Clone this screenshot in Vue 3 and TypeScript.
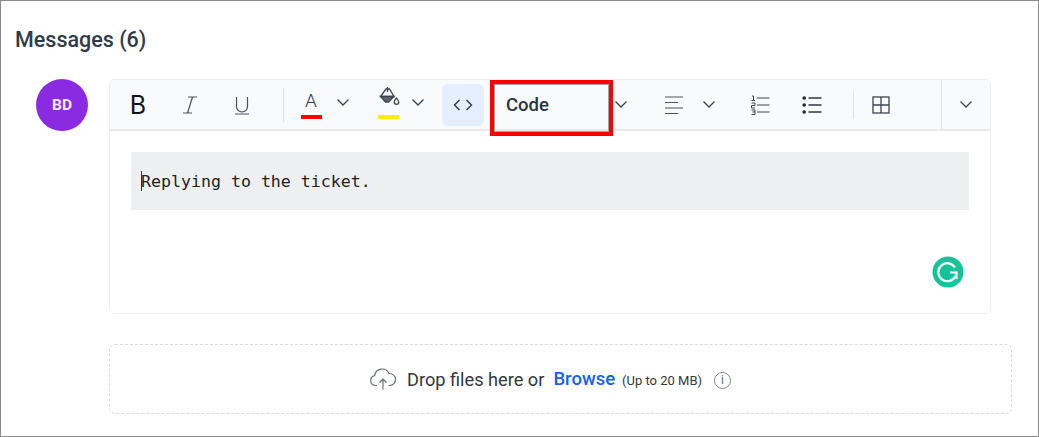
<script setup lang="ts">
const title = 'Messages (6)'
</script>

<template>
  <main class="page">
    <h1 class="title">{{ title }}</h1>
    <section class="thread">
      <div class="avatar">BD</div>
      <div class="editor">
        <div class="toolbar">
          <button class="tool fmt first"><span class="bold">B</span></button>
          <button class="tool fmt">
            <svg width="20" height="22" viewBox="0 0 20 22" fill="none" stroke="#4a525b" stroke-width="1.2"><path d="M8 3h9M3 19h9M12.500 3 7.500 19"/></svg>
          </button>
          <button class="tool fmt">
            <svg width="18" height="22" viewBox="0 0 18 22" fill="none" stroke="#4a525b" stroke-width="1.2"><path d="M3.500 3v9.500a5.500 5.500 0 0 0 11 0V3M2 20h14"/></svg>
          </button>
          <i class="sep s1"></i>
          <button class="tool color c-a">
            <span class="letter">A</span><span class="bar red"></span>
          </button>
          <svg class="chev ch1" width="20" height="12" viewBox="0 0 20 12" fill="none" stroke="#3d4650" stroke-width="1.3"><path d="m4.500 2.500 5.500 5.500 5.500-5.500"/></svg>
          <button class="tool color c-b">
            <svg class="bucket" width="22" height="22" viewBox="0 0 22 22" fill="none" stroke="#3d4650" stroke-width="1.300"><path d="M9.500 1v5M8 3h3.500l4.500 7.500H2.500z"/><path d="M2.500 10.500h13.500L10.500 16h-3z" fill="#5d656e"/><path d="M18.500 12c-1.500 1.800-2.300 2.800-2.300 4a2.300 2.300 0 0 0 4.600 0c0-1.200-.9-2.200-2.300-4z"/></svg>
            <span class="bar yellow"></span>
          </button>
          <svg class="chev ch2" width="20" height="12" viewBox="0 0 20 12" fill="none" stroke="#3d4650" stroke-width="1.3"><path d="m4.500 2.500 5.500 5.500 5.500-5.500"/></svg>
          <button class="tool code-btn">
            <svg width="20" height="14" viewBox="0 0 20 14" fill="none" stroke="#2f3944" stroke-width="1.400"><path d="M6.500 2 1.500 7l5 5M13.500 2l5 5-5 5"/></svg>
          </button>
          <div class="format">
            <span>Code</span>
            <svg width="20" height="12" viewBox="0 0 20 12" fill="none" stroke="#3d4650" stroke-width="1.3"><path d="m4.500 2.500 5.500 5.500 5.500-5.500"/></svg>
            <div class="highlight"></div>
          </div>
          <button class="tool list t-align">
            <svg width="20" height="20" viewBox="0 0 20 20" fill="none" stroke="#4a525b" stroke-width="1.200"><path d="M1 2h18M1 7.500h13M1 13h18M1 18.500h13"/></svg>
          </button>
          <svg class="chev ch3" width="20" height="12" viewBox="0 0 20 12" fill="none" stroke="#3d4650" stroke-width="1.3"><path d="m4.500 2.500 5.500 5.500 5.500-5.500"/></svg>
          <button class="tool list t-ol">
            <svg width="20" height="20" viewBox="0 0 20 20" fill="none" stroke="#3d4650" stroke-width="1.200"><path d="M7 3h12.500M7 10h12.500M7 17h12.500"/><path d="M2 1h1.500v4.500M1.500 5.500h3.500M1.500 8H5v2.500H1.500V13H5M1.500 15H5v4.500H1.500M2.500 17H5" stroke-width="1"/></svg>
          </button>
          <button class="tool list t-ul">
            <svg width="20" height="20" viewBox="0 0 20 20" fill="none" stroke="#2f3944" stroke-width="1.300"><path d="M6.500 3h13M6.500 10h13M6.500 17h13"/><circle cx="2.200" cy="3" r="1.800" fill="#1d242c" stroke="none"/><circle cx="2.200" cy="10" r="1.800" fill="#1d242c" stroke="none"/><circle cx="2.200" cy="17" r="1.800" fill="#1d242c" stroke="none"/></svg>
          </button>
          <i class="sep s2"></i>
          <button class="tool list t-table">
            <svg width="18" height="18" viewBox="0 0 18 18" fill="none" stroke="#3d4650" stroke-width="1.300"><rect x="1" y="1" width="16" height="16"/><path d="M9 1v16M1 9h16"/></svg>
          </button>
          <i class="sep s3"></i>
          <svg class="chev ch4" width="20" height="12" viewBox="0 0 20 12" fill="none" stroke="#3d4650" stroke-width="1.3"><path d="m4.500 2.500 5.500 5.500 5.500-5.500"/></svg>
        </div>
        <div class="body">
          <div class="code"><i class="caret"></i>Replying to the ticket.</div>
          <div class="grammarly">
            <svg width="32" height="32" viewBox="0 0 32 32" fill="none"><circle cx="16" cy="16" r="15.500" fill="#15c39a"/><path d="M23 11.500A9 9 0 1 0 23.500 20" stroke="#fff" stroke-width="2.200"/><path d="M24.500 23v-6.500H18" stroke="#fff" stroke-width="2.200"/></svg>
          </div>
        </div>
      </div>
    </section>
    <section class="drop">
      <svg width="28" height="24" viewBox="0 0 28 24" fill="none" stroke="#6d7279" stroke-width="1.200"><path d="M8 18.500H6.500a5 5 0 0 1-.8-9.900A7.500 7.500 0 0 1 20 6.500a6 6 0 0 1 1 12h-1.500"/><path d="M14 22.500v-10M10.500 15.500l3.500-3.500 3.500 3.500"/></svg>
      <span class="drop-text">Drop files here or</span>
      <a class="browse">Browse</a>
      <span class="limit">(Up to 20 MB)</span>
      <span class="info">i</span>
    </section>
  </main>
</template>

<style>
html, body { margin: 0; background: #fff; }
</style>

<style scoped>
.page {
  box-sizing: border-box;
  width: 1039px;
  height: 437px;
  border: 1px solid #8c8c8c;
  padding: 26px 26px 0 14px;
  font-family: Roboto, "Liberation Sans", sans-serif;
  color: #2b3540;
}
.title {
  margin: 0;
  font-size: 21.5px;
  line-height: 26px;
  font-weight: 500;
  color: #2f3b47;
}
.thread {
  display: flex;
  margin-top: 26px;
  margin-left: 21px;
}
.avatar {
  flex: none;
  width: 52px;
  height: 52px;
  border-radius: 50%;
  background: #8a2be2;
  color: #f4e9ff;
  font-size: 15.500px;
  font-weight: 700;
  display: flex;
  align-items: center;
  justify-content: center;
}
.editor {
  margin-left: 21px;
  width: 882px;
  height: 235px;
  box-sizing: border-box;
  border: 1px solid #eceef1;
  border-radius: 6px;
  position: relative;
}
.toolbar {
  height: 51px;
  box-sizing: border-box;
  border-bottom: 2px solid #e9eaec;
  background: #f9fafc;
  border-radius: 6px 6px 0 0;
  display: flex;
  align-items: center;
}
.tool {
  flex: none;
  padding: 0;
  border: 0;
  background: none;
  display: flex;
  align-items: center;
  justify-content: center;
  font-family: inherit;
}
.fmt { width: 52px; height: 32px; }
.first { margin-left: 2px; }
.bold {
  font-family: Inter, Roboto, sans-serif;
  font-size: 25px;
  font-weight: 400;
  color: #0f141a;
}
.sep {
  flex: none;
  width: 1px;
  height: 34px;
  background: #dfe1e4;
}
.s1 { margin-left: 15px; }
.s2 { margin-left: 25px; height: 28px; }
.s3 { margin-left: 44px; height: 49px; }
.color {
  width: 32px;
  height: 34px;
  position: relative;
  flex-direction: column;
  justify-content: flex-start;
}
.c-a { margin-left: 11px; }
.c-b { margin-left: 19px; }
.letter {
  font-size: 19px;
  font-weight: 300;
  line-height: 26px;
  color: #333c46;
}
.bucket { margin-top: -2px; margin-left: 1px; }
.bar {
  position: absolute;
  left: 6px;
  bottom: 3px;
  width: 21px;
  height: 4px;
}
.red { background: #ff0000; }
.yellow { background: #ffee00; }
.chev { flex: none; }
.ch1 { margin-left: 6px; margin-top: -4px; }
.ch2 { margin-left: 4px; margin-top: -4px; }
.ch3 { margin-left: 9px; }
.ch4 { margin-left: 14px; }
.code-btn {
  margin-left: 14px;
  width: 42px;
  height: 42px;
  border-radius: 6px;
  background: #e5eefc;
}
.format {
  position: relative;
  flex: none;
  margin-left: 6px;
  box-sizing: border-box;
  width: 143px;
  padding-left: 16px;
  padding-right: 2px;
  display: flex;
  align-items: center;
  justify-content: space-between;
  font-size: 18.500px;
  font-weight: 500;
  color: #2a3542;
}
.highlight {
  position: absolute;
  left: 0;
  top: -14px;
  width: 123px;
  height: 56px;
  box-sizing: border-box;
  border: 4px solid #ff0000;
  outline: 1px solid #9aa3a8;
  outline-offset: -5px;
}
.list { width: 32px; height: 32px; }
.t-align { margin-left: 25px; }
.t-ol { margin-left: 25px; }
.t-ul { margin-left: 20px; }
.t-table { margin-left: 11px; }
.body {
  position: relative;
  padding: 21px 21px 0;
}
.code {
  position: relative;
  box-sizing: border-box;
  height: 58px;
  padding-left: 10px;
  background: #eeeff1;
  font-family: "DejaVu Sans Mono", "Liberation Mono", monospace;
  font-size: 16.6px;
  line-height: 59px;
  color: #1f2226;
}
.caret {
  position: absolute;
  left: 10px;
  top: 19px;
  width: 1px;
  height: 20px;
  background: #333;
}
.grammarly {
  position: absolute;
  left: 822px;
  top: 125px;
  width: 32px;
  height: 32px;
}
.drop {
  margin: 30px 0 0 94px;
  height: 70px;
  box-sizing: border-box;
  border: 1px dashed #d9dbe3;
  border-radius: 6px;
  width: 903px;
  padding-left: 259px;
  display: flex;
  align-items: center;
}
.drop-text {
  margin-left: 10px;
  font-size: 18.200px;
  color: #33383e;
}
.browse {
  margin-left: 9px;
  font-size: 18.500px;
  font-weight: 500;
  color: #1560f5;
}
.limit {
  margin-left: 7px;
  margin-top: 2px;
  font-size: 13px;
  color: #33383e;
}
.info {
  margin-left: 12px;
  margin-top: 2px;
  width: 15px;
  height: 15px;
  border: 1px solid #80858b;
  border-radius: 50%;
  font-size: 12px;
  line-height: 15px;
  text-align: center;
  color: #6d7279;
}
</style>
